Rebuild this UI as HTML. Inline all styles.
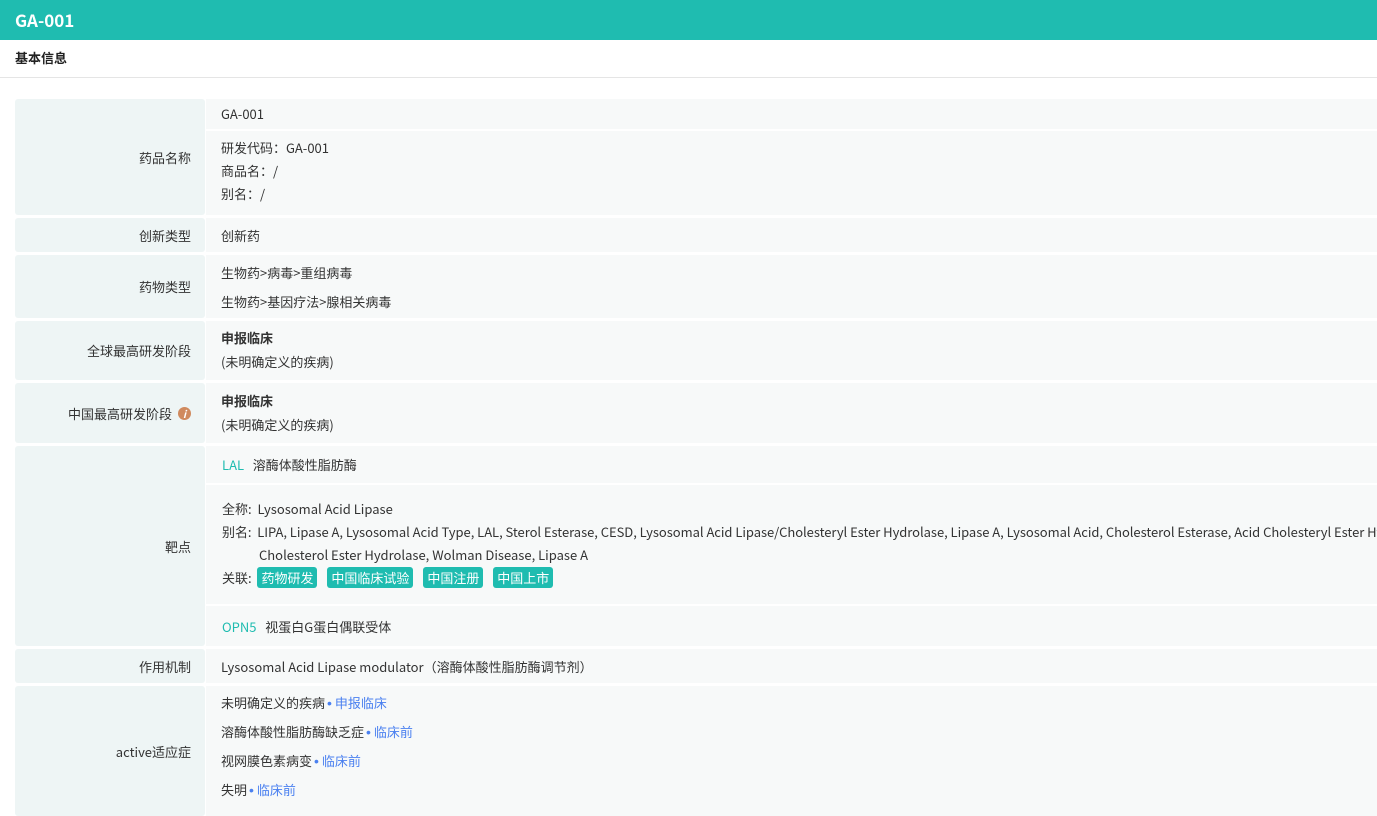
<!DOCTYPE html>
<html><head><meta charset="utf-8"><style>
body{margin:0;width:1377px;height:806px;overflow:hidden;background:#fff;font-family:"Noto Sans CJK SC","Liberation Sans",sans-serif;font-size:13px;line-height:17px;color:#333}
.hdr{position:absolute;left:0;top:0;width:1377px;height:40px;background:#1fbcb0;color:#fff;font-weight:bold;font-size:17px;line-height:40px;padding-left:15px;box-sizing:border-box}
.sub{position:absolute;left:0;top:40px;width:1377px;height:38px;border-bottom:1px solid #e5e5e5;font-weight:bold;line-height:36px;padding-left:15px;box-sizing:border-box;color:#222}
.l{position:absolute;left:15px;width:190px;background:#eef5f5;border-radius:3px;text-align:right;padding-right:14px;box-sizing:border-box;display:flex;align-items:center;justify-content:flex-end}
.v{position:absolute;left:206px;width:1171px;background:#f7f9f9;padding-left:15px;box-sizing:border-box}
.t{position:absolute;white-space:nowrap}
.g{color:#1fbcb0}
.b{color:#4a80f0}
.d{color:#4a80f0;font-family:"Liberation Sans",sans-serif;font-size:14px;margin:0 3px 0 2px}
.tag{display:inline-block;background:#1fbcb0;color:#fff;border-radius:3px;padding:0 4px;height:21px;line-height:21px;margin-right:7px}
.info{display:inline-block;width:13px;height:13px;border-radius:50%;background:#d08a5e;color:#fff;font-size:10px;font-style:italic;font-weight:bold;line-height:13px;text-align:center;margin-left:6px}
</style></head><body>
<div class="hdr">GA-001</div>
<div class="sub">基本信息</div>

<div class="l" style="top:99px;height:116px">药品名称</div>
<div class="v" style="top:99px;height:30px"></div>
<div class="v" style="top:131px;height:84px"></div>
<div class="t" style="left:221px;top:105px">GA-001</div>
<div class="t" style="left:221px;top:139px">研发代码：GA-001</div>
<div class="t" style="left:221px;top:162px">商品名：/</div>
<div class="t" style="left:221px;top:185px">别名：/</div>

<div class="l" style="top:218px;height:34px">创新类型</div>
<div class="v" style="top:218px;height:34px"></div>
<div class="t" style="left:221px;top:227px">创新药</div>

<div class="l" style="top:255px;height:63px">药物类型</div>
<div class="v" style="top:255px;height:63px"></div>
<div class="t" style="left:221px;top:264px">生物药&gt;病毒&gt;重组病毒</div>
<div class="t" style="left:221px;top:293px">生物药&gt;基因疗法&gt;腺相关病毒</div>

<div class="l" style="top:321px;height:59px">全球最高研发阶段</div>
<div class="v" style="top:321px;height:59px"></div>
<div class="t" style="left:221px;top:329px;font-weight:bold">申报临床</div>
<div class="t" style="left:221px;top:353px">(未明确定义的疾病)</div>

<div class="l" style="top:383px;height:60px">中国最高研发阶段<span class="info">i</span></div>
<div class="v" style="top:383px;height:60px"></div>
<div class="t" style="left:221px;top:392px;font-weight:bold">申报临床</div>
<div class="t" style="left:221px;top:416px">(未明确定义的疾病)</div>

<div class="l" style="top:446px;height:200px">靶点</div>
<div class="v" style="top:446px;height:37px"></div>
<div class="v" style="top:485px;height:119px"></div>
<div class="v" style="top:606px;height:40px"></div>
<div class="t" style="left:222px;top:456px"><span class="g">LAL</span>&nbsp;&nbsp; 溶酶体酸性脂肪酶</div>
<div class="t" style="left:222px;top:500px">全称: &nbsp;Lysosomal Acid Lipase</div>
<div class="t" style="left:222px;top:523px;letter-spacing:-0.04px">别名: &nbsp;LIPA, Lipase A, Lysosomal Acid Type, LAL, Sterol Esterase, CESD, Lysosomal Acid Lipase/Cholesteryl Ester Hydrolase, Lipase A, Lysosomal Acid, Cholesterol Esterase, Acid Cholesteryl Ester Hydrolase,</div>
<div class="t" style="left:259px;top:546px">Cholesterol Ester Hydrolase, Wolman Disease, Lipase A</div>
<div class="t" style="left:222px;top:567px;line-height:21px">关联: &nbsp;<span class="tag">药物研发</span> <span class="tag">中国临床试验</span> <span class="tag">中国注册</span> <span class="tag">中国上市</span></div>
<div class="t" style="left:222px;top:618px"><span class="g">OPN5</span>&nbsp;&nbsp; 视蛋白G蛋白偶联受体</div>

<div class="l" style="top:649px;height:34px">作用机制</div>
<div class="v" style="top:649px;height:34px"></div>
<div class="t" style="left:221px;top:658px">Lysosomal Acid Lipase modulator（溶酶体酸性脂肪酶调节剂）</div>

<div class="l" style="top:686px;height:130px">active适应症</div>
<div class="v" style="top:686px;height:130px"></div>
<div class="t" style="left:221px;top:694px">未明确定义的疾病<span class="d">•</span><span class="b">申报临床</span></div>
<div class="t" style="left:221px;top:723px">溶酶体酸性脂肪酶缺乏症<span class="d">•</span><span class="b">临床前</span></div>
<div class="t" style="left:221px;top:752px">视网膜色素病变<span class="d">•</span><span class="b">临床前</span></div>
<div class="t" style="left:221px;top:781px">失明<span class="d">•</span><span class="b">临床前</span></div>
</body></html>
